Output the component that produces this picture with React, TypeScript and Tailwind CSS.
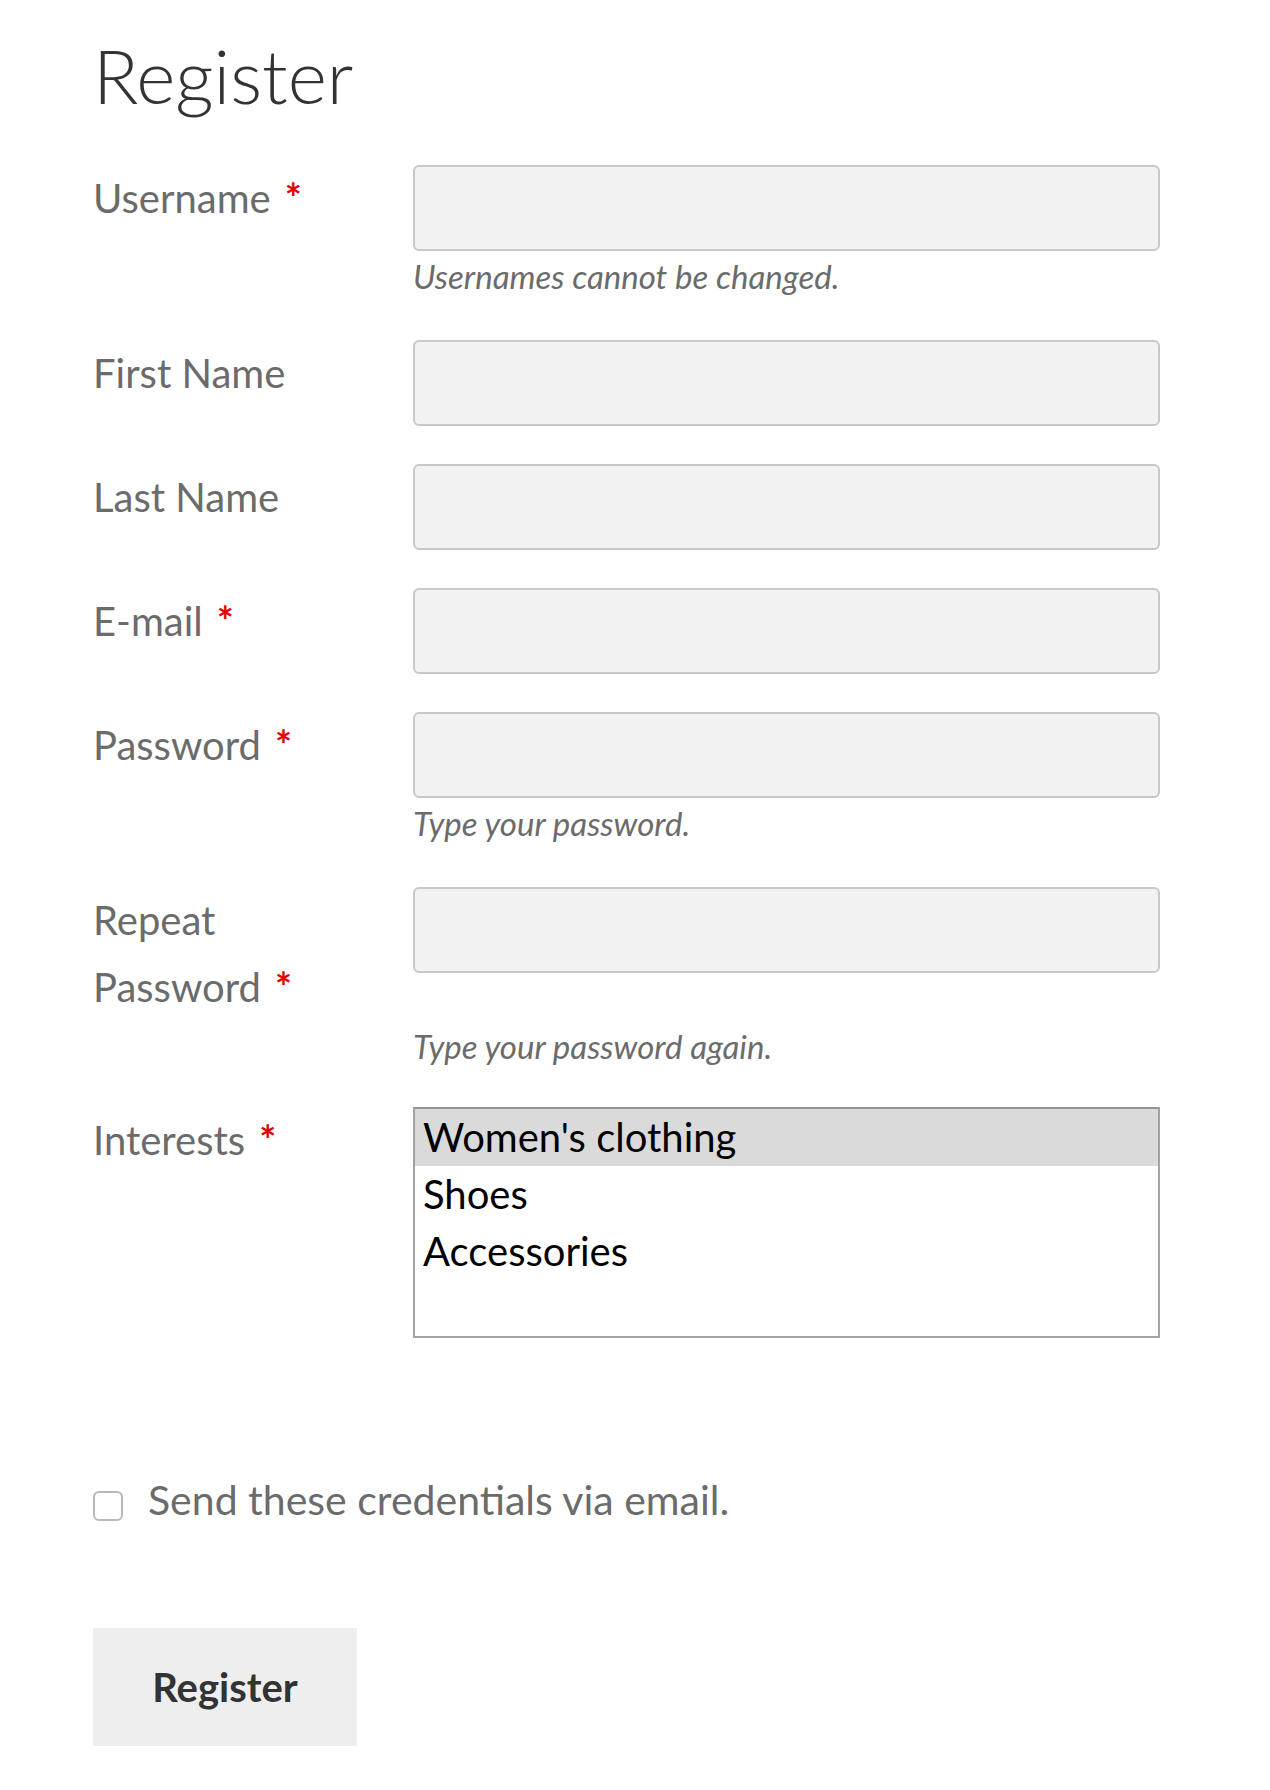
const fields = [
  { label: ["Username"], required: true, hint: "Usernames cannot be changed." },
  { label: ["First Name"] },
  { label: ["Last Name"] },
  { label: ["E-mail"], required: true },
  { label: ["Password"], required: true, hint: "Type your password." },
  { label: ["Repeat", "Password"], required: true, hint: "Type your password again." },
];

const interests = ["Women's clothing", "Shoes", "Accessories"];

function Star() {
  return <span className="ml-[14px] font-bold text-[#e60000]">*</span>;
}

function FieldLabel({ lines, required }: { lines: string[]; required?: boolean }) {
  return (
    <label className="text-[40px] leading-[67px] text-[#6b6b6b]">
      {lines.map((line, i) => (
        <span key={line} className="block">
          {line}
          {required && i === lines.length - 1 && <Star />}
        </span>
      ))}
    </label>
  );
}

function FieldRow({ field, last }: { field: (typeof fields)[number]; last?: boolean }) {
  return (
    <div className={`${last ? "mb-[35px]" : "mb-[38px]"} grid grid-cols-[320px_747px]`}>
      <FieldLabel lines={field.label} required={field.required} />
      <input
        type="text"
        className="h-[86px] w-[747px] rounded-[6px] border-2 border-[#c8c8c8] bg-[#f2f2f2] outline-none"
      />
      {field.hint && (
        <p className="col-start-2 text-[33px] italic leading-[51px] text-[#6b6b6b]">{field.hint}</p>
      )}
    </div>
  );
}

export default function App() {
  return (
    <div className="min-h-[1790px] w-full bg-white pl-[93px] font-[Lato,sans-serif]">
      <h1 className="pt-[30px] pb-[45px] text-[75px] font-light leading-[90px] text-[#333333]">
        Register
      </h1>

      <form onSubmit={(e) => e.preventDefault()}>
        {fields.map((f, i) => (
          <FieldRow key={f.label.join(" ")} field={f} last={i === fields.length - 1} />
        ))}

        {/* Interests multi-select */}
        <div className="grid grid-cols-[320px_747px]">
          <FieldLabel lines={["Interests"]} required />
          <div className="h-[231px] w-[747px] border-2 border-[#a3a3a3] border-t-[#949494] bg-white">
            {interests.map((item, i) => (
              <div
                key={item}
                className={`h-[57px] px-[8px] text-[40px] leading-[57px] text-black ${
                  i === 0 ? "bg-[#dadada]" : ""
                }`}
              >
                {item}
              </div>
            ))}
          </div>
        </div>

        <label className="mt-[134px] flex items-start gap-[25px]">
          <span className="mt-[19px] h-[30px] w-[30px] shrink-0 rounded-[6px] border-2 border-[#b8b8b8] bg-white" />
          <span className="text-[41px] leading-[56px] text-[#6b6b6b]">
            Send these credentials via email.
          </span>
        </label>

        <button
          type="submit"
          className="mt-[100px] h-[118px] w-[264px] bg-[#eeeeee] text-[40px] font-bold leading-[48px] text-[#333333]"
        >
          Register
        </button>
      </form>
    </div>
  );
}
